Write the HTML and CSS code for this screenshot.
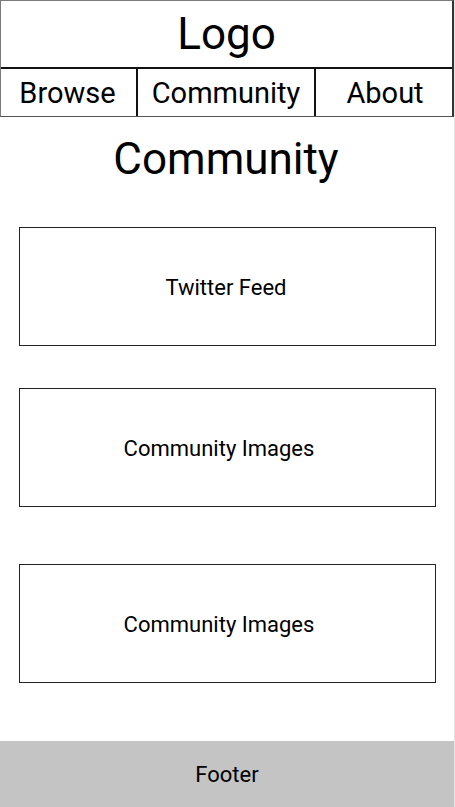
FILE: index.html
```html
<!DOCTYPE html>
<html>
<head>
<meta charset="utf-8">
<link rel="stylesheet" href="styles.css">
</head>
<body>
<div class="page">
  <header class="header">
    <div class="logo">Logo</div>
    <nav class="nav">
      <div class="nav-item browse">Browse</div>
      <div class="nav-item community">Community</div>
      <div class="nav-item about">About</div>
    </nav>
  </header>
  <main class="main">
    <h1 class="title">Community</h1>
    <div class="cards">
      <div class="card first">Twitter Feed</div>
      <div class="card second">Community Images</div>
      <div class="card third">Community Images</div>
    </div>
  </main>
  <footer class="footer">Footer</footer>
</div>
</body>
</html>
```
FILE: styles.css
```css
html, body {
  margin: 0;
  padding: 0;
  background: #ffffff;
}
body {
  font-family: Roboto, "Liberation Sans", sans-serif;
  color: #000;
}
.page {
  width: 455px;
  height: 807px;
  box-sizing: border-box;
  border-right: 1px solid #e4e4e4;
  display: flex;
  flex-direction: column;
}
.header {
  width: 454px;
  box-sizing: border-box;
  border: 1px solid #7a7a7a;
  border-right: 2px solid #333;
  border-bottom: 1px solid #555;
}
.logo {
  height: 68px;
  box-sizing: border-box;
  border-bottom: 2px solid #111;
  display: flex;
  align-items: center;
  justify-content: center;
  font-size: 44px;
  line-height: 1;
}
.nav {
  display: flex;
  height: 47px;
}
.nav-item {
  display: flex;
  align-items: center;
  justify-content: center;
  font-size: 29px;
  box-sizing: border-box;
}
.browse { width: 137px; border-right: 2px solid #111; padding-right: 2px; }
.community { width: 178px; border-right: 2px solid #111; }
.about { flex: 1; padding-left: 2px; }
.main {
  flex: 1;
}
.title {
  margin: 0;
  height: 110px;
  padding-top: 16px;
  box-sizing: border-box;
  text-align: center;
  font-weight: 400;
  font-size: 44px;
  line-height: 52px;
  padding-right: 2px;
}
.cards {
  display: flex;
  flex-direction: column;
  padding-left: 19px;
}
.card {
  width: 417px;
  height: 119px;
  box-sizing: border-box;
  border: 1px solid #222;
  display: flex;
  align-items: center;
  justify-content: center;
  font-size: 22px;
  padding-top: 2px;
}
.first { padding-right: 3px; }
.second { margin-top: 42px; padding-right: 17px; }
.third { margin-top: 57px; padding-right: 17px; }
.footer {
  width: 454px;
  height: 66px;
  background: #c4c4c4;
  display: flex;
  align-items: center;
  justify-content: center;
  font-size: 22px;
}
```
